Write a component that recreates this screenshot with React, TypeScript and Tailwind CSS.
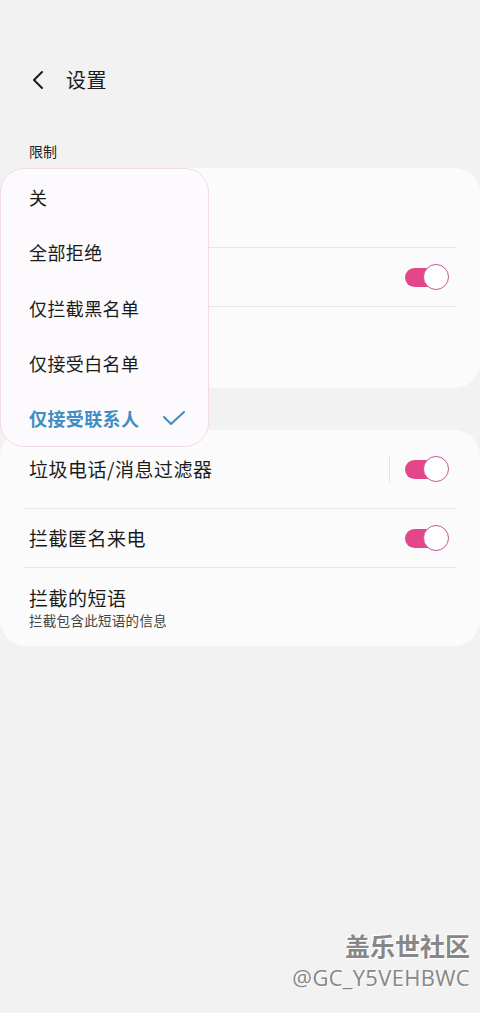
import React from "react";

const font = { fontFamily: '"Noto Sans CJK SC", "Noto Sans", sans-serif' };

function Toggle() {
  return (
    <div className="relative w-[44px] h-[26px] flex items-center">
      <div className="w-[40px] h-[19px] rounded-full bg-[#e4468c]" />
      <div className="absolute right-0 top-0 w-[26px] h-[26px] rounded-full bg-white border-[1.5px] border-[#c9559a]" />
    </div>
  );
}

function Divider() {
  return <div className="mx-[23px] h-px bg-[#e6e6e6]" />;
}

export default function App() {
  return (
    <div style={font} className="relative w-[480px] h-[1013px] bg-[#f2f2f2] overflow-hidden text-[#1b1b1b]">
      {/* header */}
      <div className="flex items-center h-[40px] mt-[60px] pl-[29px]">
        <svg width="16" height="20" viewBox="0 0 16 20" className="ml-[2px]">
          <path d="M11 2 L3 10 L11 18" fill="none" stroke="#1b1b1b" strokeWidth="2" strokeLinecap="round" strokeLinejoin="round" />
        </svg>
        <span className="ml-[19px] text-[20px] leading-none tracking-[0.5px]">设置</span>
      </div>

      <div className="mt-[41px] pl-[29px] h-[20px] text-[14px] leading-[20px] text-[#222]">限制</div>

      {/* card 1 */}
      <div className="mt-[7px] bg-[#fbfbfb] rounded-[26px]">
        <div className="h-[79px]" />
        <Divider />
        <div className="h-[58px] flex items-center justify-end pl-[29px] pr-[31px]">
          <Toggle />
        </div>
        <Divider />
        <div className="h-[81px]" />
      </div>

      {/* card 2 */}
      <div className="mt-[42px] bg-[#fbfbfb] rounded-[26px]">
        <div className="h-[78px] flex items-center justify-between pl-[29px] pr-[31px]">
          <span className="text-[19px] tracking-[0.5px]">垃圾电话/消息过滤器</span>
          <div className="flex items-center">
            <div className="w-px h-[26px] bg-[#e2e2e2] mr-[15px]" />
            <Toggle />
          </div>
        </div>
        <Divider />
        <div className="h-[58px] flex items-center justify-between pl-[29px] pr-[31px]">
          <span className="text-[19px] tracking-[0.5px]">拦截匿名来电</span>
          <Toggle />
        </div>
        <Divider />
        <div className="h-[78px] flex flex-col justify-center pl-[29px]">
          <span className="text-[19px] leading-[26px] tracking-[0.5px]">拦截的短语</span>
          <span className="text-[13.5px] leading-[18px] tracking-[0.3px] text-[#444]">拦截包含此短语的信息</span>
        </div>
      </div>

      {/* popup menu */}
      <div className="absolute left-0 top-[168px] w-[209px] h-[279px] bg-[#fcfafc] rounded-[24px] border border-[#f1dbe8] flex flex-col pt-[1px]">
        {["关", "全部拒绝", "仅拦截黑名单", "仅接受白名单"].map((t) => (
          <div key={t} className="h-[56px] flex items-center pl-[28px] text-[18px] tracking-[0.4px]">
            {t}
          </div>
        ))}
        <div className="h-[56px] flex items-center justify-between pl-[28px] pr-[22px] text-[18px] tracking-[0.4px] font-bold text-[#3d8dc4]">
          <span>仅接受联系人</span>
          <svg width="24" height="16" viewBox="0 0 24 16">
            <path d="M2 7 L9 14 L22 2" fill="none" stroke="#4189bd" strokeWidth="2" strokeLinecap="round" strokeLinejoin="round" />
          </svg>
        </div>
      </div>

      {/* watermark */}
      <div className="absolute right-[10px] top-[928px] flex flex-col items-end">
        <span
          className="text-[25px] leading-[34px] font-bold text-[#878787]"
          style={{ textShadow: "1px 1px 0 #fff, -1px -1px 0 #fff" }}
        >
          盖乐世社区
        </span>
        <span
          className="text-[22px] leading-[30px] tracking-[0.3px] text-[#878787]"
          style={{ fontFamily: '"Open Sans", "Noto Sans", sans-serif', textShadow: "1px 1px 0 #fff" }}
        >
          @GC_Y5VEHBWC
        </span>
      </div>
    </div>
  );
}
